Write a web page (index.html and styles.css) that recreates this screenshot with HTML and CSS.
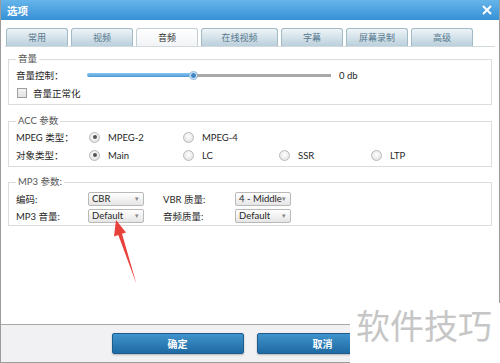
FILE: index.html
```html
<!DOCTYPE html>
<html lang="zh">
  <head>
    <meta charset="utf-8" />
    <title>选项</title>
    <link rel="stylesheet" href="styles.css">
  </head>
  <body>
    <div class="window">
      <div class="titlebar">
        <span class="title">选项</span>
        <svg class="close" width="10" height="10" viewBox="0 0 10 10">
          <path d="M1 1 L9 9 M9 1 L1 9" stroke="#fff" stroke-width="2" />
        </svg>
      </div>

      <div class="main">
        <div class="tabs">
          <div class="tab">常用</div>
          <div class="tab">视频</div>
          <div class="tab active">音频</div>
          <div class="tab wide">在线视频</div>
          <div class="tab">字幕</div>
          <div class="tab">屏幕录制</div>
          <div class="tab">高级</div>
        </div>

        <fieldset class="group">
          <legend>音量</legend>
          <div class="row">
            <span class="label">音量控制：</span>
            <div class="slider">
              <div class="fill"></div>
              <div class="thumb"></div>
              <div class="rest"></div>
            </div>
            <span class="db">0 db</span>
          </div>
          <div class="row">
            <span class="check"></span>
            <span>音量正常化</span>
          </div>
        </fieldset>

        <fieldset class="group">
          <legend>ACC 参数</legend>
          <div class="row radios">
            <span class="label">MPEG 类型：</span>
            <span class="opt"><span class="radio on"></span>MPEG-2</span>
            <span class="opt"><span class="radio"></span>MPEG-4</span>
          </div>
          <div class="row radios">
            <span class="label">对象类型：</span>
            <span class="opt"><span class="radio on"></span>Main</span>
            <span class="opt"><span class="radio"></span>LC</span>
            <span class="opt"><span class="radio"></span>SSR</span>
            <span class="opt"><span class="radio"></span>LTP</span>
          </div>
        </fieldset>

        <fieldset class="group mp3">
          <legend>MP3 参数:</legend>
          <div class="row selects">
            <span class="label">编码:</span>
            <span class="select">CBR<i>▾</i></span>
            <span class="label2">VBR 质量:</span>
            <span class="select">4 - Middle<i>▾</i></span>
          </div>
          <div class="row selects">
            <span class="label">MP3 音量:</span>
            <span class="select">Default<i>▾</i></span>
            <span class="label2">音频质量:</span>
            <span class="select">Default<i>▾</i></span>
          </div>
        </fieldset>
      </div>

      <div class="footer">
        <button type="button" class="btn">确定</button>
        <button type="button" class="btn">取消</button>
      </div>
    </div>

    <svg class="arrow" width="500" height="363" viewBox="0 0 500 363">
      <polygon points="116,220 126,232.5 122,233.7 136.5,284 118.3,234.9 114,236.5" fill="#e8403a" />
    </svg>

    <div class="watermark">软件技巧</div>
  </body>
</html>
```

FILE: styles.css
```css
html, body {
  margin: 0;
  padding: 0;
  width: 500px;
  height: 363px;
  overflow: hidden;
}

body {
  font-family: Lato, "Noto Sans CJK SC", sans-serif;
  font-size: 9.5px;
  color: #262626;
  background: #ffffff;
  position: relative;
}

.window {
  box-sizing: border-box;
  height: 363px;
  display: flex;
  flex-direction: column;
  border-left: 1px solid #9c9c9c;
  border-right: 1px solid #9c9c9c;
  border-bottom: 1px solid #9c9c9c;
}

.titlebar {
  height: 20px;
  flex-shrink: 0;
  display: flex;
  align-items: center;
  justify-content: space-between;
  padding: 0 7px 0 6px;
  background: linear-gradient(#66b5eb, #3691d6);
}

.title {
  color: #fff;
  font-family: "Noto Sans CJK SC", sans-serif;
  font-size: 10.5px;
  font-weight: bold;
}

.main {
  flex: 1;
  padding-top: 8px;
}

/* tabs */
.tabs {
  display: flex;
  gap: 3px;
  margin: 0 4px 0 4px;
  padding-left: 1px;
  border-bottom: 1px solid #d3dade;
}

.tab {
  width: 60px;
  height: 17px;
  line-height: 17px;
  text-align: center;
  border: 1px solid #a3bac7;
  border-bottom: none;
  border-radius: 3px 3px 0 0;
  background: linear-gradient(#eef4f7, #bad0dc);
  color: #56778d;
  font-family: "Noto Sans CJK SC", sans-serif;
  font-size: 9px;
}

.tab.wide {
  width: 75px;
}

.tab.active {
  background: linear-gradient(#ffffff, #f1f3f5);
  border-color: #c3ced5;
  color: #333;
}

/* groups */
.group {
  margin: 6px 7px 0 7px;
  padding: 1px 7px 2px 7px;
  border: 1px solid #dcdcdc;
  min-inline-size: 0;
}

.group + .group {
  margin-top: 10px;
}

.group.mp3 {
  margin-top: 9px;
  padding-top: 2px;
  padding-bottom: 1px;
}

.group legend {
  padding: 0 2px;
  line-height: 12px;
  color: #555;
}

.row {
  height: 18px;
  display: flex;
  align-items: center;
  white-space: nowrap;
}

.mp3 .row {
  height: 17px;
}

.label {
  width: 71px;
  flex-shrink: 0;
}

/* slider */
.slider {
  width: 244px;
  display: flex;
  align-items: center;
}

.fill {
  width: 103px;
  height: 4px;
  border-radius: 2px 0 0 2px;
  background: linear-gradient(#8cc6ef, #4c98d6);
}

.thumb {
  width: 5px;
  height: 5px;
  border-radius: 50%;
  background: #3d86c6;
  border: 1px solid #e4eef6;
  box-shadow: 0 0 0 1px #9cc4e4;
}

.rest {
  flex: 1;
  height: 3px;
  background: #a9a9a9;
}

.db {
  margin-left: 8px;
}

.check {
  width: 8px;
  height: 8px;
  margin: 0 6px 0 1px;
  border: 1px solid #9d9d9d;
  background: linear-gradient(#f4f4f4, #e2e2e2);
}

/* radios */
.radios .label {
  width: 73px;
}

.opt {
  display: flex;
  align-items: center;
  gap: 8px;
  width: 94px;
}

.opt:nth-child(3) {
  width: 96px;
}

.opt:nth-child(4) {
  width: 92px;
}

.radio {
  box-sizing: border-box;
  width: 11px;
  height: 11px;
  border-radius: 50%;
  border: 1px solid #b9b9b9;
  background: radial-gradient(circle at 50% 40%, #ffffff, #dcdcdc);
  display: flex;
  align-items: center;
  justify-content: center;
}

.radio.on::after {
  content: "";
  width: 4px;
  height: 4px;
  border-radius: 50%;
  background: #555;
}

/* selects */
.selects .label {
  width: 72px;
}

.label2 {
  width: 72px;
  margin-left: 19px;
}

.select {
  box-sizing: border-box;
  width: 56px;
  height: 14px;
  padding: 0 4px 0 3px;
  display: flex;
  align-items: center;
  justify-content: space-between;
  border: 1px solid #b9b9b9;
  border-radius: 2px;
  background: linear-gradient(#ffffff, #e5e5e5);
}

.select i {
  font-style: normal;
  font-size: 7px;
  color: #888;
}

/* footer */
.footer {
  height: 38px;
  flex-shrink: 0;
  display: flex;
  justify-content: center;
  gap: 13px;
  padding-top: 8px;
  box-sizing: border-box;
  border-top: 1px solid #a8a8a8;
  background: #f1f1f4;
}

.btn {
  width: 132px;
  height: 21px;
  border: 1px solid #1c5d8e;
  border-radius: 2px;
  background: linear-gradient(#3f93cc, #1f6aa3);
  box-shadow: 0 1px 2px rgba(0, 0, 0, 0.25);
  color: #fff;
  font-family: "Noto Sans CJK SC", sans-serif;
  font-size: 10px;
  font-weight: bold;
}

/* overlays */
.arrow {
  position: absolute;
  left: 0;
  top: 0;
  pointer-events: none;
}

.watermark {
  position: absolute;
  left: 350px;
  top: 303px;
  width: 150px;
  height: 60px;
  background: #fff;
  color: #c6c6c6;
  font-family: "Noto Sans CJK SC", sans-serif;
  font-size: 34px;
  line-height: 44px;
  padding-left: 6px;
  box-sizing: border-box;
}
```
